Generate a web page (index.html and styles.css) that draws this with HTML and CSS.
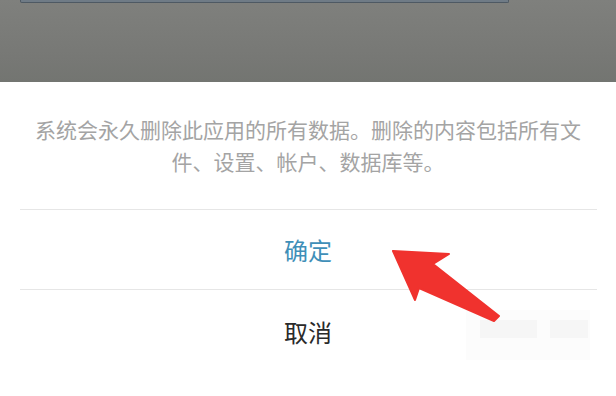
FILE: index.html
```html
<!DOCTYPE html>
<html lang="zh-CN">
<head>
<meta charset="utf-8">
<link rel="stylesheet" href="styles.css">
</head>
<body>
<div class="screen">
  <div class="backdrop">
    <div class="frame"></div>
  </div>
  <div class="sheet">
    <p class="message">系统会永久删除此应用的所有数据。删除的内容包括所有文件、设置、帐户、数据库等。</p>
    <div class="divider"></div>
    <div class="action action-ok">确定</div>
    <div class="divider"></div>
    <div class="action action-cancel">取消</div>
  </div>
  <div class="watermark">
    <span class="wm-a"></span><span class="wm-b"></span>
  </div>
  <svg class="arrow" width="616" height="396" viewBox="0 0 616 396">
    <polygon points="393,251 449,254 433,264 499,316 494,321 419,288 415,300" fill="#f0322e" stroke="#f0322e" stroke-width="2" stroke-linejoin="round"/>
  </svg>
</div>
</body>
</html>
```

FILE: styles.css
```css
html, body {
  margin: 0;
  padding: 0;
}
body {
  width: 616px;
  height: 396px;
  overflow: hidden;
  background: #ffffff;
  font-family: "Noto Sans CJK SC", "Noto Sans", sans-serif;
}
.screen {
  position: relative;
  width: 616px;
  height: 396px;
  display: flex;
  flex-direction: column;
}
.backdrop {
  height: 82px;
  flex: none;
  background: linear-gradient(#7f807d, #777875 70%, #737571);
  box-shadow: 0 1px 1px rgba(0,0,0,0.15);
}
.frame {
  margin-left: 20px;
  width: 487px;
  height: 2px;
  background: #6f7b86;
  border: 1px solid #4e5963;
  border-top: none;
  border-radius: 0 0 2px 2px;
}
.sheet {
  flex: 1;
  background: #ffffff;
  display: flex;
  flex-direction: column;
}
.message {
  margin: 31px auto 0;
  width: 552px;
  font-size: 21px;
  line-height: 32px;
  color: #a4a4a4;
  text-align: center;
  height: 64px;
}
.divider {
  margin: 32px 19px 0 20px;
  height: 1px;
  background: #e6e6e6;
}
.divider + .action + .divider {
  margin-top: 0;
}
.action {
  height: 79px;
  display: flex;
  align-items: center;
  justify-content: center;
  font-size: 24px;
}
.action-ok {
  color: #3f8fb8;
}
.action-cancel {
  color: #2a2a2a;
  padding-top: 2px;
}
.watermark {
  position: absolute;
  left: 466px;
  top: 310px;
  width: 124px;
  height: 50px;
  background: #fcfcfc;
}
.wm-a, .wm-b {
  position: absolute;
  top: 10px;
  height: 18px;
  background: #f6f6f6;
}
.wm-a { left: 14px; width: 57px; }
.wm-b { left: 84px; width: 38px; }
.arrow {
  position: absolute;
  left: 0;
  top: 0;
}
```
